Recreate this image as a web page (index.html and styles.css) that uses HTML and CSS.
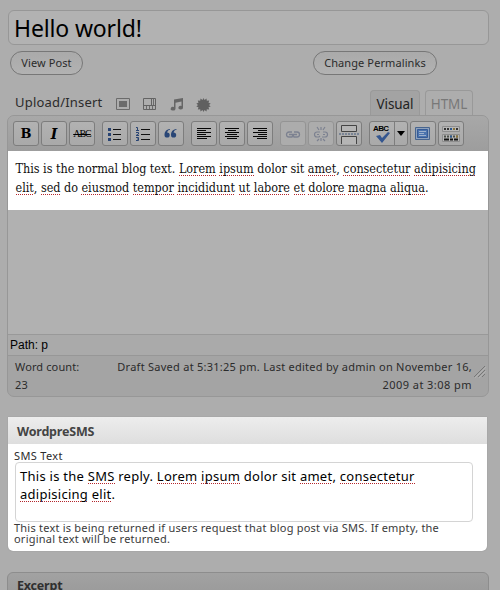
FILE: index.html
```
<!DOCTYPE html>
<html lang="en">
<head>
<meta charset="utf-8">
<title>Edit Post</title>
<link rel="stylesheet" href="styles.css">
</head>
<body>
<main class="page">
  <div class="title-field">Hello world!</div>
  <div class="permalink-row">
    <span class="pill view">View Post</span>
    <span class="pill change">Change Permalinks</span>
  </div>
  <div class="media-row">
    <span class="upload">Upload/Insert</span>
    <svg class="media" viewBox="0 0 14 12" width="14" height="12"><path d="M.5.5h13v11H.5z" fill="none" stroke="#6b6b6b"/><path d="M3 3h8v6H3z" fill="#6b6b6b"/></svg>
    <svg class="media" viewBox="0 0 14 12" width="14" height="12"><path d="M.5.5h12v11H.5zM8.500 0v8M0 7.500h13" fill="none" stroke="#636363"/><path d="M10.500 1v6M3.500 8v3M6.500 8v3M9.500 8v3" stroke="#6b6b6b"/></svg>
    <svg class="media" viewBox="0 0 14 13" width="14" height="13"><path d="M4 1.500L13 0v9.500a2.300 1.800 0 1 1-1.500-1.500V3.500L5.500 4.700v6a2.400 1.900 0 1 1-1.500-1.800z" fill="#666"/></svg>
    <svg class="media" viewBox="0 0 14 14" width="14" height="14"><path d="M6.500 0l1 2 2-1.500.3 2.300 2.400-.3-.7 2.200 2.200.8-1.700 1.500 1.700 1.500-2.200.7.7 2.300-2.400-.3-.3 2.300-2-1.500-1 2-1-2-2 1.500-.3-2.300-2.400.3.7-2.300L-.7 8.500 1 7-.7 5.500l2.200-.8L.8 2.500l2.400.3.3-2.300 2 1.500z" fill="#606060"/></svg>
    <div class="tabs"><span class="tab active">Visual</span><span class="tab html">HTML</span></div>
  </div>
  <section class="editor">
    <div class="toolbar">
      <div class="group">
        <span class="btn bold">B</span><span class="btn italic">I</span><span class="btn strike">ABC</span>
      </div>
      <div class="group">
        <span class="btn"><svg viewBox="0 0 16 14" width="16" height="14"><path d="M6 2.500h8M6 7.500h8M6 12.500h8" stroke="#111"/><path d="M1 1h3v3H1zM1 6h3v3H1zM1 11h3v3H1z" fill="#294473"/></svg></span>
        <span class="btn"><svg viewBox="0 0 16 14" width="16" height="14"><path d="M6 2.500h9M6 7.500h9M6 12.500h9" stroke="#111"/><path d="M1 .5h1.500v3M1 3.500h3M1 5.500h2.500v1.500L1 8.500h3M1 10.500h2.500v3H1M2 12h1.500" fill="none" stroke="#294473"/></svg></span>
        <span class="btn"><svg viewBox="0 0 16 14" width="16" height="14"><path d="M7 2C3 2.500 1.500 5 1.500 8a2.600 2.600 0 1 0 2.600-2.600C4.500 4 5.500 3 7 2.800zM13.500 2C9.500 2.500 8 5 8 8a2.600 2.600 0 1 0 2.600-2.600C11 4 12 3 13.500 2.800z" fill="#294676"/></svg></span>
      </div>
      <div class="group">
        <span class="btn"><svg viewBox="0 0 16 12" width="16" height="12"><path d="M1 .5h14M1 2.500h9M1 4.500h14M1 6.500h9M1 8.500h14M1 10.500h10" stroke="#050505"/></svg></span>
        <span class="btn"><svg viewBox="0 0 16 12" width="16" height="12"><path d="M1 .5h14M4 2.500h8M1 4.500h14M3 6.500h10M1 8.500h14M3 10.500h10" stroke="#050505"/></svg></span>
        <span class="btn"><svg viewBox="0 0 16 12" width="16" height="12"><path d="M1 .5h14M6 2.500h9M1 4.500h14M6 6.500h9M1 8.500h14M5 10.500h10" stroke="#050505"/></svg></span>
      </div>
      <div class="group">
        <span class="btn dim"><svg viewBox="0 0 16 14" width="16" height="14"><path d="M7 5H4a2.500 2.500 0 0 0 0 5h3l1-2M9 5h3a2.500 2.500 0 0 1 0 5H9L8 8M4 7.500h8" fill="none" stroke="#7c8190" stroke-width="1.300"/></svg></span>
        <span class="btn dim"><svg viewBox="0 0 16 16" width="16" height="16"><path d="M7 6H4a2.500 2.500 0 0 0 0 5h2l1-1M10 6h2a2.500 2.500 0 0 1 0 5H9M4 8.500h2M10 8.500h2M8 1v3M4 1l2 3M12 1l-2 3M8 15v-3M4 15l2-2M12 15l-2-2" fill="none" stroke="#7c8190" stroke-width="1.200"/></svg></span>
        <span class="btn"><svg viewBox="0 0 20 20" width="20" height="20"><path d="M2.500 1.500h15v6h-15zM2.500 20v-7.500h15V20" fill="#b5b5b5" stroke="#444"/><path d="M0 10h20" stroke="#455a7d" stroke-dasharray="2 1"/></svg></span>
      </div>
      <div class="group">
        <span class="btn split"><span class="spell">ABC<svg viewBox="0 0 16 12" width="16" height="12"><path d="M1 5l4-1 2 3 6-6 2 1-8 10z" fill="#34568f"/></svg></span><span class="drop"><svg viewBox="0 0 8 5" width="8" height="5"><path d="M0 0h8L4 5z" fill="#000"/></svg></span></span>
        <span class="btn"><svg viewBox="0 0 16 14" width="16" height="14"><path d="M.5.500h14v12H.5z" fill="#8fa2bc" stroke="#48658f"/><path d="M2.500 2.500h10v8h-10z" fill="#4c74ae" stroke="#365b96"/><path d="M4 4.500h7M4 6.500h5M4 8.500h7" stroke="#9db0cc"/></svg></span>
        <span class="btn"><svg viewBox="0 0 18 16" width="18" height="16"><path d="M.5.500h17v5H.5zM.5 8.500h17v7H.5z" fill="#b7b7b7" stroke="#8d8d8d"/><path d="M2 3h14" stroke="#343434" stroke-width="2" stroke-dasharray="2 1"/><path d="M2 10.500h14" stroke="#4b4f48" stroke-width="2" stroke-dasharray="2 1"/><path d="M2 13.500h5M8 13.500h3M12 13.500h4" stroke="#111" stroke-width="2"/><path d="M8 3h2M8 10.500h2" stroke="#2c588d" stroke-width="2"/><path d="M11 3h2M14 10.500h2" stroke="#8b743a" stroke-width="2"/></svg></span>
      </div>
    </div>
    <div class="content">
      <div class="c1">This is the normal blog text. <u>Lorem</u> <u>ipsum</u> dolor sit <u>amet</u>, <u>consectetur</u> <u>adipisicing</u></div>
      <div class="c2"><u>elit</u>, <u>sed</u> do <u>eiusmod</u> <u>tempor</u> <u>incididunt</u> <u>ut</u> <u>labore</u> <u>et</u> <u>dolore</u> <u>magna</u> <u>aliqua</u>.</div>
    </div>
    <div class="blank"></div>
    <div class="path">Path: p</div>
    <div class="status">
      <div class="count">Word count:<br>23</div>
      <div class="saved"><span class="s1">Draft Saved at 5:31:25 pm. Last edited by admin on November 16,</span><br><span class="s2">2009 at 3:08 pm</span></div>
      <svg class="grip" viewBox="0 0 12 12" width="12" height="12"><path d="M0 11L11 0M4 11l7-7M8 11l3-3" stroke="#777"/><path d="M1 12L12 1M5 12l7-7" stroke="#bbb" stroke-width=".6"/></svg>
    </div>
  </section>
  <section class="sms">
    <h3 class="heading">WordpreSMS</h3>
    <div class="inside">
      <div class="label">SMS Text</div>
      <div class="area"><span class="a1">This is the <u>SMS</u> reply. <u>Lorem</u> <u>ipsum</u> dolor sit <u>amet</u>, <u>consectetur</u></span><br><span class="a2"><u>adipisicing</u> <u>elit</u>.</span></div>
      <div class="help">This text is being returned if users request that blog post via SMS. If empty, the<br>original text will be returned.</div>
    </div>
  </section>
  <section class="excerpt"><h3 class="heading">Excerpt</h3></section>
</main>
</body>
</html>
```
FILE: styles.css
```
* { box-sizing: border-box; }
body { margin: 0; background: #adadad; font-family: "Noto Sans", sans-serif; color: #2b2b2b; white-space: nowrap; }
.page { width: 500px; height: 590px; overflow: hidden; padding: 10px 12px 0 7px; }
svg { display: block; flex: none; overflow: visible; }
u { text-decoration: none; background: repeating-linear-gradient(90deg, #b3262c 0 1px, transparent 1px 2px) 0 100% / 100% 1px no-repeat; }
.title-field { height: 35px; margin-left: 1px; width: 481px; border: 1px solid #979797; border-radius: 6px; background: #b2b2b2; color: #000; font-size: 23px; line-height: 34px; padding-left: 5px; letter-spacing: -.15px; }
.permalink-row { display: flex; justify-content: space-between; height: 39px; padding: 6px 51px 0 3px; }
.pill { height: 24px; border: 1px solid #777; border-radius: 12px; background: linear-gradient(#aaa, #b2b2b2); font-size: 11px; line-height: 22px; text-align: center; }
.view { width: 73px; letter-spacing: .1px; }
.change { width: 124px; letter-spacing: .1px; }
.media-row { display: flex; height: 31px; padding: 6px 15px 0 8px; align-items: flex-start; }
.upload { width: 101px; font-size: 13px; line-height: 24px; letter-spacing: .2px; }
.media { margin: 8px 13px 0 0; }
.tabs { margin-left: auto; display: flex; gap: 5px; }
.tab { height: 25px; border: 1px solid #999; border-bottom: 0; border-radius: 4px 4px 0 0; text-align: center; font-size: 13.5px; line-height: 27px; color: #787878; letter-spacing: -.1px; }
.active { width: 50px; background: #a3a3a3; color: #222; }
.html { width: 48px; }
.editor { width: 482px; height: 282px; border: 1px solid #979797; border-radius: 7px; background: #a4a4a4; overflow: hidden; }
.toolbar { display: flex; height: 35px; padding: 5px 0 0 5px; gap: 7px; background: linear-gradient(#a8a8a8, #9d9d9d); }
.group { display: flex; gap: 2px; }
.btn { width: 26px; height: 25px; border: 1px solid #7d7d7d; border-radius: 3px; background: linear-gradient(#b2b2b2, #a9a9a9); display: flex; align-items: center; justify-content: center; color: #000; }
.bold, .italic { font: bold 14px "DejaVu Serif", serif; }
.bold { font-size: 13px; }
.italic { font-style: italic; }
.strike { font: 10px "Liberation Serif", serif; letter-spacing: -1px; text-decoration: line-through; }
.dim { border-color: #949494; background: #acacac; }
.split { width: 39px; }
.spell { position: relative; width: 24px; font: bold 8px/8px "Liberation Sans", sans-serif; height: 18px; padding-left: 3px; letter-spacing: -.6px; }
.spell svg { position: absolute; left: 5px; top: 6px; }
.drop { flex: 1; height: 23px; border-left: 1px solid #7d7d7d; display: flex; align-items: center; justify-content: center; }
.content { height: 59px; background: #fff; color: #111; font: 12.5px/19px "DejaVu Serif Condensed", "DejaVu Serif", serif; font-stretch: condensed; padding: 8px 0 0 7.5px; }
.c1, .c2 { letter-spacing: -.02px; }
.blank { height: 125px; background: #b1b1b1; border-bottom: 1px solid #999; }
.path { height: 21px; background: #aaa; border-bottom: 1px solid #979797; color: #000; font: 12px/20px "Liberation Sans", sans-serif; padding-left: 2px; }
.status { display: flex; justify-content: space-between; padding: 2px 2px 0 7px; font-size: 11px; line-height: 18px; }
.count { letter-spacing: .12px; }
.saved { margin-left: auto; margin-right: 2px; text-align: right; letter-spacing: .26px; }
.s2 { letter-spacing: .45px; }
.grip { margin-top: 8px; }
.sms { width: 479px; height: 134px; margin: 20px 0 0 1px; background: #fff; border-radius: 0 0 5px 5px; box-shadow: 0 0 1px #777; }
.heading { margin: 0; font-size: 12.5px; color: #444; letter-spacing: -.2px; }
.sms .heading { height: 27px; padding-left: 9px; background: linear-gradient(#ededed, #dedede); line-height: 29px; }
.inside { padding: 5px 15px 0 6px; font-size: 11px; }
.label { line-height: 13px; letter-spacing: .35px; }
.area { height: 60px; width: 458px; margin-left: 1px; border: 1px solid #d4d4d4; border-radius: 4px; color: #000; font-size: 13px; line-height: 18px; padding: 4px 0 0 4px; letter-spacing: .26px; }
.area u { background-position: 0 calc(100% - 1px); }
.help { line-height: 11px; letter-spacing: .22px; color: #3a3a3a; }
.excerpt { width: 482px; margin-top: 21px; height: 40px; border: 1px solid #8d8d8d; border-radius: 6px 6px 0 0; background: linear-gradient(#a2a2a2, #989898 27px); }
.excerpt .heading { padding-left: 9px; line-height: 25px; color: #303030; }
```
